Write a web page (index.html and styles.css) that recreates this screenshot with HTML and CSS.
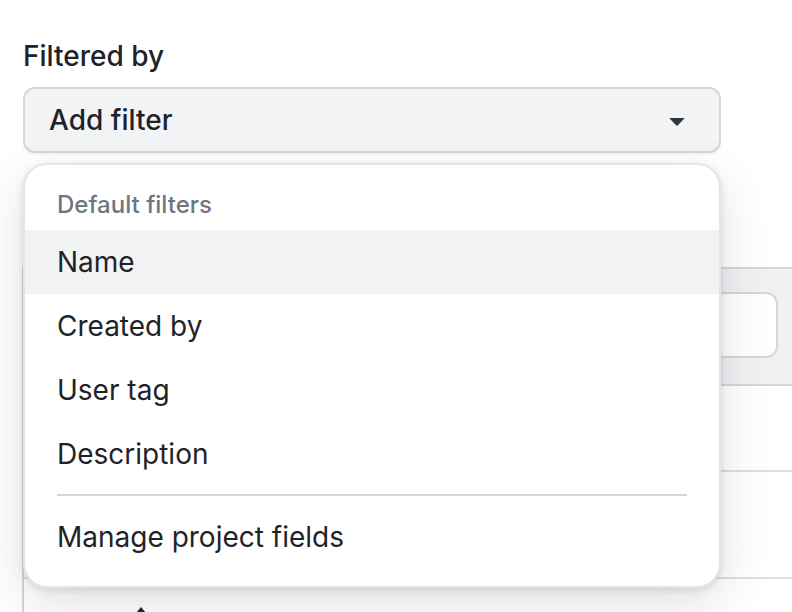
FILE: index.html
```html
<!DOCTYPE html>
<html lang="en">
<head>
    <meta charset="UTF-8">
    <meta name="viewport" content="width=device-width, initial-scale=1.0">
    <title>Filtered by</title>
    <link rel="stylesheet" href="styles.css">
</head>
<body>

    <div class="filter-field">
        <label class="filter-label" for="add-filter">Filtered by</label>
        <button class="filter-button" id="add-filter">
            <span>Add filter</span>
            <svg class="caret" viewBox="0 0 16 16" width="32" height="32" aria-hidden="true">
                <path d="m4.427 7.427 3.396 3.396a.25.25 0 0 0 .354 0l3.396-3.396A.25.25 0 0 0 11.396 7H4.604a.25.25 0 0 0-.177.427Z"></path>
            </svg>
        </button>
    </div>

    <div class="stage">
        <!-- table behind the open menu -->
        <div class="panel">
            <div class="panel-head">
                <div class="search-box"></div>
            </div>
            <div class="panel-row"></div>
            <div class="panel-row tall"></div>
            <div class="panel-row last">
                <svg class="sort-icon" viewBox="0 0 16 16" width="16" height="16" aria-hidden="true">
                    <path d="M8 1 3 7h10Z"></path>
                </svg>
            </div>
        </div>

        <div class="menu" role="menu">
            <div class="menu-group">Default filters</div>
            <div class="menu-item active">Name</div>
            <div class="menu-item">Created by</div>
            <div class="menu-item">User tag</div>
            <div class="menu-item">Description</div>
            <div class="menu-divider"></div>
            <div class="menu-item">Manage project fields</div>
        </div>
    </div>

</body>
</html>
```
FILE: styles.css
```css
body {
    margin: 0;
    padding: 36px 0 0 23px;
    font-family: Inter, "Noto Sans", sans-serif;
    color: #1f2328;
    background-color: #fff;
    overflow: hidden;
    height: 612px;
    box-sizing: border-box;
}
.filter-field {
    display: flex;
    flex-direction: column;
    gap: 11px;
    width: 698px;
}
.filter-label {
    font-size: 28px;
    font-weight: 500;
    line-height: 40px;
}
.filter-button {
    display: flex;
    align-items: center;
    justify-content: space-between;
    height: 66px;
    padding: 0 26px 0 24px;
    border: 2px solid #d3d6da;
    border-radius: 12px;
    background-color: #f3f4f6;
    box-shadow: 0 2px 0 rgba(31, 35, 40, 0.04);
    font-family: inherit;
    font-size: 28px;
    font-weight: 500;
    color: #1f2328;
    cursor: pointer;
}
.caret {
    fill: #30363d;
}
.stage {
    position: relative;
    padding-top: 114px;
}

/* table underneath */
.panel {
    margin-left: -1px;
    width: 900px;
    border-top: 2px solid #d3d6da;
    border-left: 2px solid #d3d6da;
}
.panel-head {
    display: flex;
    justify-content: flex-end;
    height: 117px;
    padding: 23px 146px 0 0;
    box-sizing: border-box;
    background-color: #f0f1f3;
    border-bottom: 2px solid #d3d6da;
}
.search-box {
    width: 200px;
    height: 66px;
    box-sizing: border-box;
    border: 2px solid #d3d6da;
    border-radius: 12px;
    background-color: #fff;
}
.panel-row {
    height: 84px;
    border-bottom: 2px solid #dcdee2;
}
.panel-row.tall {
    height: 105px;
}
.panel-row.last {
    height: 60px;
    border-bottom: 0;
    padding: 27px 0 0 109px;
    box-sizing: border-box;
}
.sort-icon {
    display: block;
    fill: #1f2328;
}

/* open menu */
.menu {
    position: absolute;
    top: 10px;
    left: 0;
    width: 698px;
    box-sizing: border-box;
    padding: 14px 0 17px;
    border: 2px solid #e3e5e8;
    border-radius: 24px;
    background-color: #fff;
    box-shadow: 0 2px 6px rgba(31, 35, 40, 0.12), 0 16px 48px rgba(66, 74, 83, 0.17);
}
.menu-group {
    padding: 8px 32px 7px;
    font-size: 24px;
    font-weight: 500;
    line-height: 36px;
    color: #6e7781;
}
.menu-item {
    display: flex;
    align-items: center;
    height: 64px;
    padding: 0 32px;
    font-size: 28px;
    line-height: 36px;
    color: #1f2328;
}
.menu-item.active {
    background-color: #f2f3f5;
}
.menu-divider {
    height: 2px;
    margin: 8px 32px 9px;
    background-color: #d3d6da;
}
```
